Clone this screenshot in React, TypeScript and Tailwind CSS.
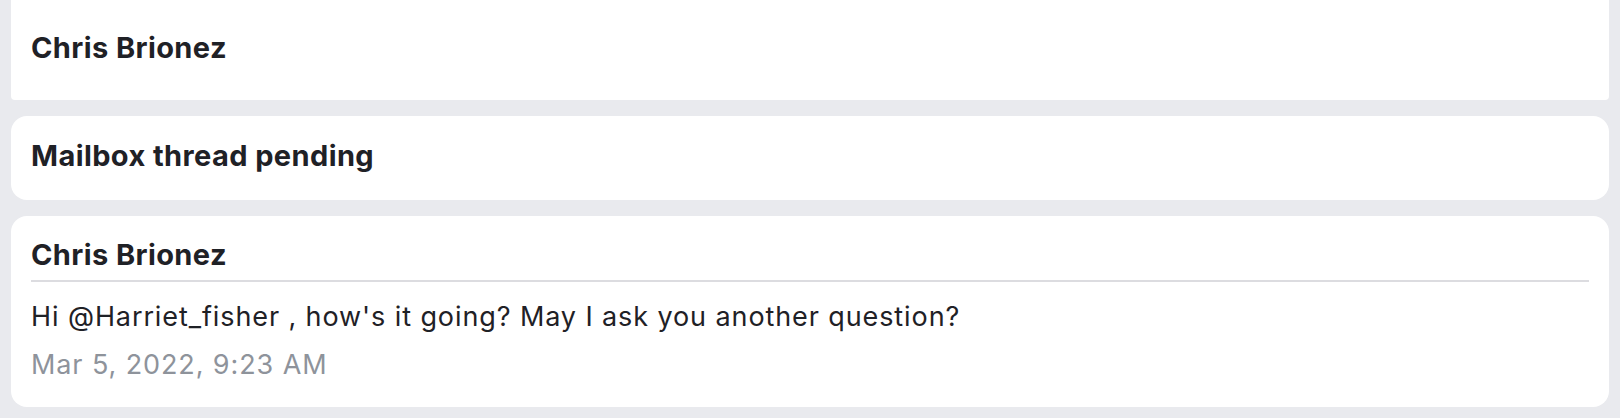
export default function App() {
  const font = { fontFamily: 'Inter, "Noto Sans", sans-serif' };

  return (
    <div className="min-h-screen bg-[#e9eaee] px-[11px] pb-[11px]" style={font}>
      <div className="flex flex-col gap-4">
        <div className="bg-white rounded-b-[4px] px-5 pt-[31px] pb-[35px]">
          <h3 className="text-[29px] leading-[34px] font-bold tracking-[0.4px] text-[#1f2126]">Chris Brionez</h3>
        </div>

        <div className="bg-white rounded-[16px] px-5 pt-[23px] pb-[27px]">
          <h3 className="text-[29px] leading-[34px] font-bold tracking-[0.4px] text-[#1f2126]">Mailbox thread pending</h3>
        </div>

        <div className="bg-white rounded-[16px] px-5 pt-[22px] pb-[26px]">
          <h3 className="text-[29px] leading-[34px] font-bold tracking-[0.4px] text-[#1f2126]">Chris Brionez</h3>
          <div className="mt-[8px] h-[2px] bg-[#dcdce0]" />
          <p className="mt-[19px] text-[27px] leading-[32px] tracking-[0.9px] text-[#1f2126]">
            Hi @Harriet_fisher , how's it going? May I ask you another question?
          </p>
          <p className="mt-[16px] text-[27px] leading-[32px] tracking-[0.9px] text-[#8e939b]">Mar 5, 2022, 9:23 AM</p>
        </div>
      </div>
    </div>
  );
}
